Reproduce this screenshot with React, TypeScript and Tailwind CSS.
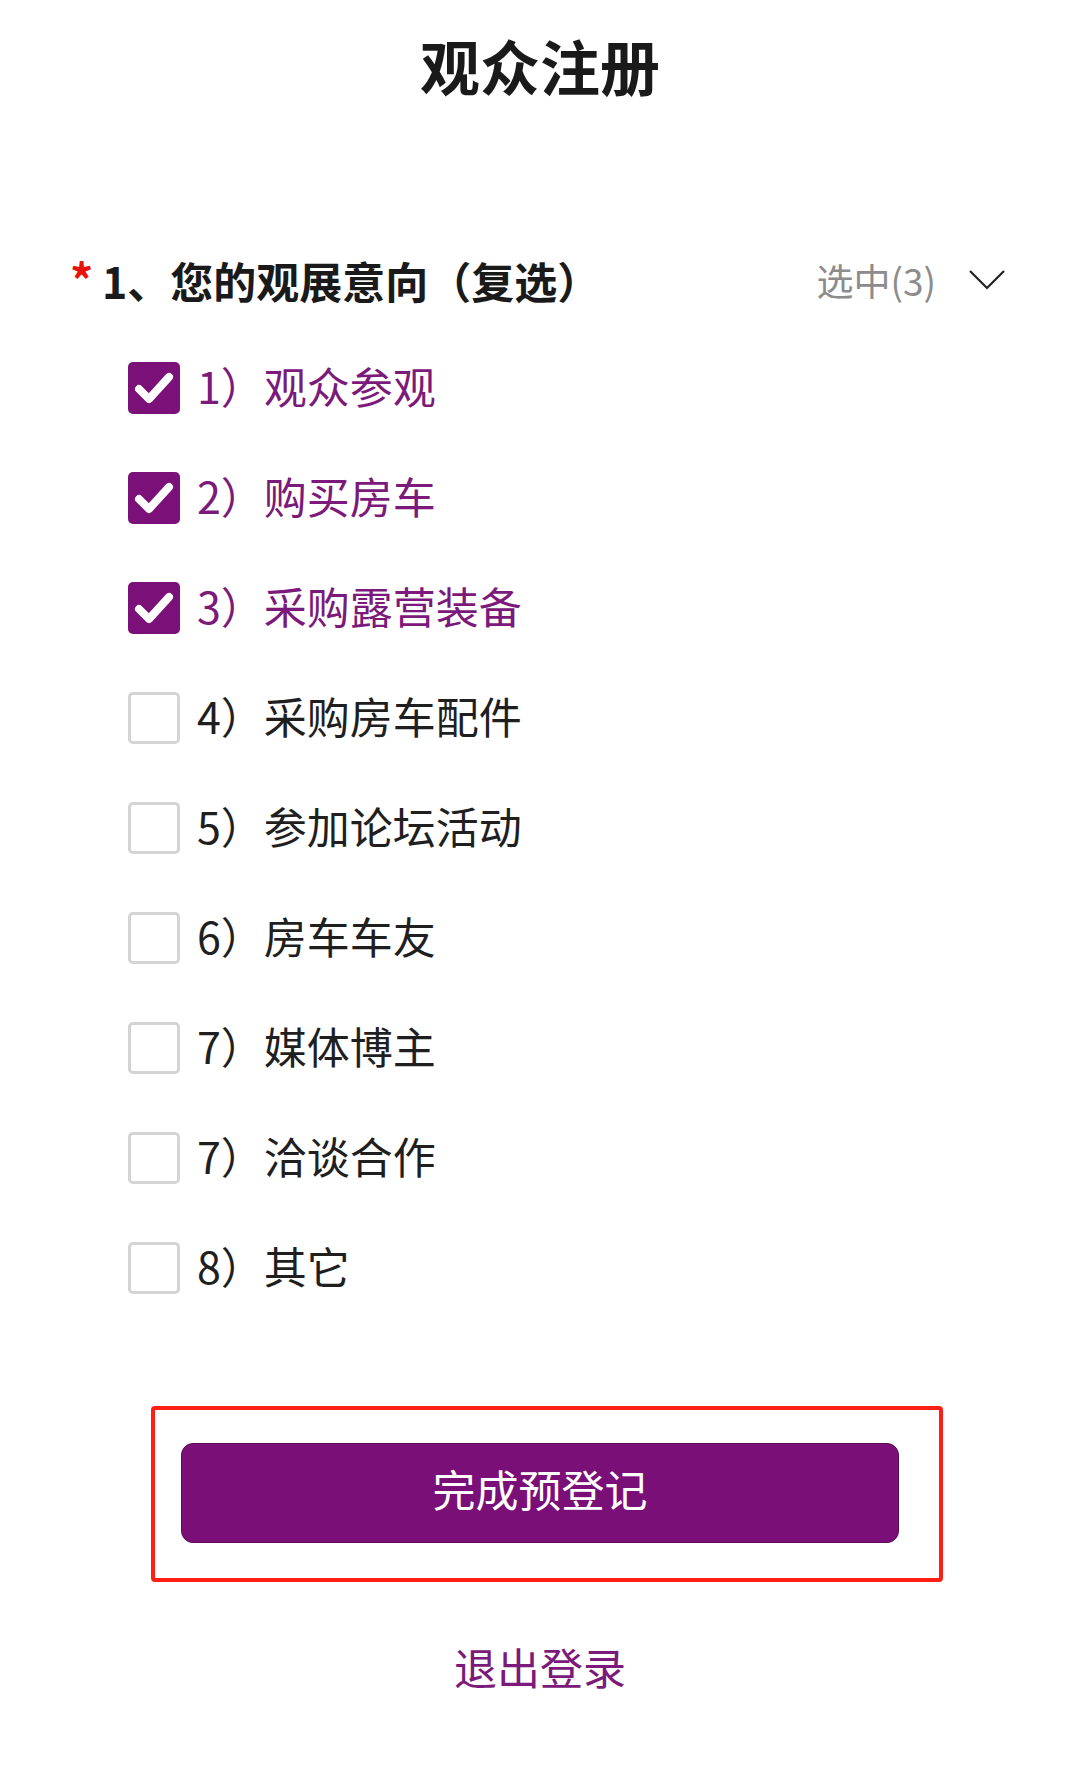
const options = [
  { label: '1）观众参观', checked: true },
  { label: '2）购买房车', checked: true },
  { label: '3）采购露营装备', checked: true },
  { label: '4）采购房车配件', checked: false },
  { label: '5）参加论坛活动', checked: false },
  { label: '6）房车车友', checked: false },
  { label: '7）媒体博主', checked: false },
  { label: '7）洽谈合作', checked: false },
  { label: '8）其它', checked: false },
];

function CheckBox({ checked }: { checked: boolean }) {
  if (checked) {
    return (
      <span className="flex h-[52px] w-[52px] shrink-0 items-center justify-center rounded-[5px] bg-[#7b1078]">
        <svg width="52" height="52" viewBox="0 0 52 52">
          <polyline points="11,27 21,37 41,15" fill="none" stroke="#fff" strokeWidth="8" strokeLinecap="round" strokeLinejoin="round" />
        </svg>
      </span>
    );
  }
  return <span className="h-[52px] w-[52px] shrink-0 rounded-[5px] border-[3px] border-[#d4d4d4] bg-white" />;
}

export default function App() {
  return (
    <div className="flex min-h-[1789px] w-[1080px] flex-col bg-white [font-family:'Noto_Sans_CJK_SC',sans-serif]">
      <div className="flex h-[134px] items-center justify-center pb-[4px]">
        <h1 className="text-[60px] leading-none font-bold text-[#1a1a1a]">观众注册</h1>
      </div>

      {/* question header */}
      <div className="mt-[119px] flex h-[60px] items-center justify-between pr-[75px] pb-[6px] pl-[70px]">
        <div className="flex items-center">
          <span className="mb-[4px] inline-block w-[32px] text-[46px] leading-none font-bold text-[#e8140c]">*</span>
          <span className="text-[43px] leading-none font-bold text-[#1a1a1a]">1、您的观展意向（复选）</span>
        </div>
        <div className="flex items-center">
          <span className="text-[37px] leading-none text-[#8c8c8c]">选中(3)</span>
          <svg className="ml-[33px]" width="36" height="20" viewBox="0 0 36 20">
            <polyline points="1,1 18,18 35,1" fill="none" stroke="#222" strokeWidth="2.2" />
          </svg>
        </div>
      </div>

      <div className="mt-[20px] flex flex-col pl-[128px]">
        {options.map((o, i) => (
          <div key={i} className="flex h-[110px] items-center">
            <CheckBox checked={o.checked} />
            <span
              className={'mb-[6px] ml-[17px] text-[43px] leading-none ' + (o.checked ? 'text-[#7b1a7a]' : 'text-[#1f1f1f]')}
            >
              {o.label}
            </span>
          </div>
        ))}
      </div>

      <div className="mt-[83px] ml-[151px] h-[176px] w-[792px] rounded-[4px] border-4 border-[#ff1f14] pt-[33px] pr-[40px] pl-[26px]">
        <button className="flex h-[100px] w-full items-center justify-center rounded-[12px] border border-[#5a0a57] bg-[#7b0f78] pb-[10px] text-[43px] leading-none text-white">
          完成预登记
        </button>
      </div>

      <div className="mt-[58px] flex h-[56px] items-center justify-center pb-[4px]">
        <span className="text-[43px] leading-none text-[#7b1a7a]">退出登录</span>
      </div>
    </div>
  );
}
